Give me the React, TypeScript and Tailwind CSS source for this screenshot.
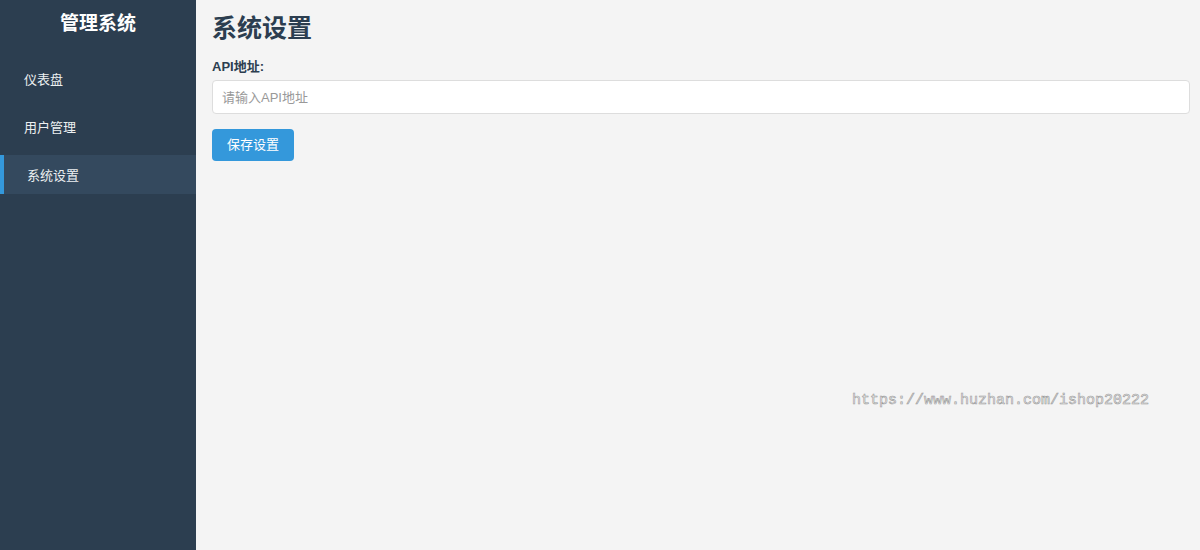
const menu = [
  { label: "仪表盘", active: false },
  { label: "用户管理", active: false },
  { label: "系统设置", active: true },
];

export default function App() {
  return (
    <div className="relative flex h-[550px] w-[1200px] overflow-hidden bg-[#f4f4f4] font-['Liberation_Sans','Noto_Sans_CJK_SC',sans-serif]">
      <aside className="flex w-[196px] shrink-0 flex-col bg-[#2c3e50] text-[#ecf0f1]">
        <h2 className="pt-[12px] text-center text-[19px] font-bold leading-[24px] text-white">
          管理系统
        </h2>
        <nav className="mt-[23px] flex flex-col gap-[9px]">
          {menu.map((item) => (
            <div
              key={item.label}
              className={`flex h-[39px] items-center pt-[2px] text-[13px] ${
                item.active
                  ? "border-l-4 border-[#3498db] bg-[#34495e] pl-[23px]"
                  : "pl-[24px]"
              }`}
            >
              {item.label}
            </div>
          ))}
        </nav>
      </aside>

      <main className="flex flex-1 flex-col pl-[16px] pr-[10px] pt-[12px]">
        <h1 className="text-[25px] font-bold leading-[32px] text-[#2c3e50]">
          系统设置
        </h1>
        <label className="mt-[14px] text-[13px] font-bold leading-[18px] text-[#2c3e50]">
          API地址:
        </label>
        <input
          type="text"
          placeholder="请输入API地址"
          className="mt-[4px] h-[34px] w-full rounded-[4px] border border-[#dddddd] bg-white px-[9px] text-[13px] placeholder:text-[#999999] outline-none"
        />
        <div className="mt-[15px]">
          <button
            type="button"
            className="h-[32px] rounded-[4px] bg-[#3498db] px-[15px] text-[13px] text-white"
          >
            保存设置
          </button>
        </div>
      </main>

      <div className="absolute left-[852px] top-[390px] font-['Liberation_Mono',monospace] text-[15px] leading-[22px] text-[#f4f4f4] [-webkit-text-stroke:0.6px_#9a9a9a]">
        https://www.huzhan.com/ishop20222
      </div>
    </div>
  );
}
